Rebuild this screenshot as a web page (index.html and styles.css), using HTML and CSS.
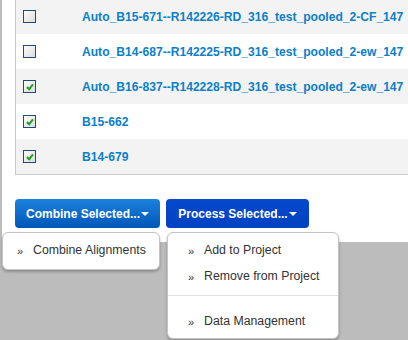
FILE: index.html
```html
<!DOCTYPE html>
<html lang="en">
<head>
    <meta charset="UTF-8">
    <title>Alignments</title>
    <link rel="stylesheet" href="styles.css">
</head>
<body>
    <div class="panel">
        <div class="grid">
            <div class="grid__row grid__row--alt">
                <span class="check"></span>
                <a class="grid__link" href="#">Auto_B15-671--R142226-RD_316_test_pooled_2-CF_147</a>
            </div>
            <div class="grid__row">
                <span class="check"></span>
                <a class="grid__link" href="#">Auto_B14-687--R142225-RD_316_test_pooled_2-ew_147</a>
            </div>
            <div class="grid__row grid__row--alt">
                <span class="check check--on"></span>
                <a class="grid__link" href="#">Auto_B16-837--R142228-RD_316_test_pooled_2-ew_147</a>
            </div>
            <div class="grid__row">
                <span class="check check--on"></span>
                <a class="grid__link" href="#">B15-662</a>
            </div>
            <div class="grid__row grid__row--alt">
                <span class="check check--on"></span>
                <a class="grid__link" href="#">B14-679</a>
            </div>
        </div>

        <div class="actions">
            <div class="dropdown">
                <button class="btn btn--combine">Combine Selected...<span class="caret"></span></button>
                <ul class="menu menu--combine">
                    <li class="menu__item">Combine Alignments</li>
                </ul>
            </div>
            <div class="dropdown">
                <button class="btn btn--process">Process Selected...<span class="caret"></span></button>
                <ul class="menu menu--process">
                    <li class="menu__item">Add to Project</li>
                    <li class="menu__item">Remove from Project</li>
                    <li class="menu__divider"></li>
                    <li class="menu__item">Data Management</li>
                </ul>
            </div>
        </div>
    </div>
</body>
</html>
```

FILE: styles.css
```css
body {
    margin: 0;
    height: 340px;
    overflow: hidden;
    background: #bcbcbc;
    font-family: "Liberation Sans", Arial, sans-serif;
}

.panel {
    margin-left: 2px;
    padding: 0 0 14px 13px;
    background: #fff;
}

.grid {
    margin-top: -1px;
    border-left: 1px solid #c9c9c9;
    border-bottom: 1px solid #c9c9c9;
    overflow: hidden;
}

.grid__row {
    display: flex;
    align-items: center;
    height: 35px;
    background: #fff;
    white-space: nowrap;
}

.grid__row--alt {
    background: #f3f3f3;
}

.check {
    flex: none;
    box-sizing: border-box;
    width: 13px;
    height: 13px;
    margin: 0 46px 1px 7px;
    border: 1px solid #1f4b78;
    background: linear-gradient(135deg, #fcfcfc, #dcdcdc);
    position: relative;
}

.check--on::after {
    content: "";
    position: absolute;
    left: 4px;
    top: 2px;
    width: 2px;
    height: 5px;
    border: solid #21a121;
    border-width: 0 2px 2px 0;
    transform: rotate(40deg);
}

.grid__link {
    color: #0a80c8;
    font-size: 12.1px;
    font-weight: bold;
    text-decoration: none;
}

.actions {
    display: flex;
    gap: 6px;
    margin-top: 24px;
}

.dropdown {
    position: relative;
}

.btn {
    display: flex;
    align-items: center;
    justify-content: center;
    box-sizing: border-box;
    height: 29px;
    padding: 0;
    border: 0;
    border-radius: 4px;
    color: #fff;
    font-family: inherit;
    font-size: 12px;
    font-weight: bold;
    white-space: nowrap;
    cursor: pointer;
}

.btn--combine {
    width: 145px;
    background: linear-gradient(#1c82de, #0156b8);
}

.btn--process {
    width: 143px;
    background: linear-gradient(#0649cb, #0142c2);
}

.caret {
    width: 0;
    height: 0;
    margin: 1px 0 0 1px;
    border-left: 4px solid transparent;
    border-right: 4px solid transparent;
    border-top: 4px solid #fff;
}

.menu {
    position: absolute;
    top: 33px;
    margin: 0;
    padding: 4px 0;
    list-style: none;
    background: #fff;
    border: 1px solid #c4c4c4;
    border-radius: 6px;
    box-shadow: 0 2px 3px rgba(0, 0, 0, 0.25);
}

.menu--combine {
    left: -13px;
    width: 156px;
    padding: 4px 0 6px;
}

.menu--process {
    left: 1px;
    width: 170px;
}

.menu__item {
    padding: 4px 0 4px 36px;
    color: #333;
    font-size: 12.3px;
    line-height: 18px;
    position: relative;
    white-space: nowrap;
}

.menu--combine .menu__item {
    padding-left: 30px;
}

.menu__item::before {
    content: "»";
    position: absolute;
    left: 20px;
    top: 5px;
    font-size: 11px;
}

.menu--combine .menu__item::before {
    left: 14px;
}

.menu__divider {
    height: 1px;
    margin: 6px 0 12px;
    background: #e2e2e2;
}
```
